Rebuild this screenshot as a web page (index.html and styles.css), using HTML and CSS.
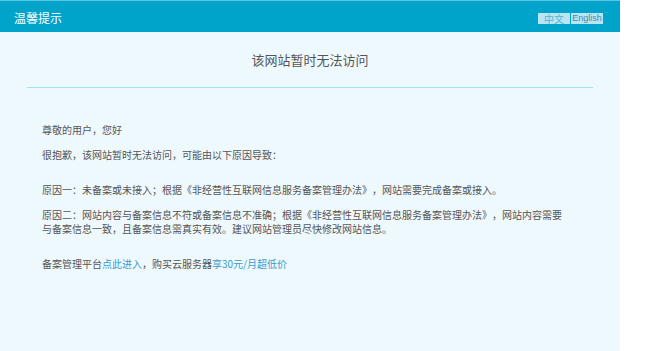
FILE: index.html
```html
<!DOCTYPE html>
<html lang="zh-CN">
<head>
    <meta charset="UTF-8">
    <meta name="viewport" content="width=device-width, initial-scale=1.0">
    <title>该网站暂时无法访问</title>
    <link rel="stylesheet" href="styles.css">
</head>
<body>
    <div class="page">
        <div class="header">
            <span class="header-title">温馨提示</span>
            <div class="lang">
                <span class="lang-item lang-cn">中文</span>
                <span class="lang-item lang-en">English</span>
            </div>
        </div>
        <h1 class="notice-title">该网站暂时无法访问</h1>
        <div class="divider"></div>
        <div class="notice-body">
            <div class="group">
                <p>尊敬的用户，您好</p>
                <p>很抱歉，该网站暂时无法访问，可能由以下原因导致：</p>
            </div>
            <div class="group">
                <p>原因一：未备案或未接入；根据《非经营性互联网信息服务备案管理办法》，网站需要完成备案或接入。</p>
                <p>原因二：网站内容与备案信息不符或备案信息不准确；根据《非经营性互联网信息服务备案管理办法》，网站内容需要与备案信息一致，且备案信息需真实有效。建议网站管理员尽快修改网站信息。</p>
            </div>
            <div class="group">
                <p>备案管理平台<a href="#">点此进入</a>，购买云服务器<a href="#">享30元/月超低价</a></p>
            </div>
        </div>
    </div>
</body>
</html>
```

FILE: styles.css
```css
body {
    margin: 0;
    background: #fff;
    font-family: 'Noto Sans CJK SC', 'Noto Sans', sans-serif;
    color: #555;
    text-spacing-trim: space-all;
}

.page {
    width: 620px;
    min-height: 351px;
    background: #eef9fe;
}

.header {
    height: 31px;
    border-top: 1px solid #5cc6e0;
    background: #00a4cb;
    padding: 0 14px;
    display: flex;
    justify-content: space-between;
    align-items: center;
}

.header-title {
    color: #fff;
    font-size: 12px;
    line-height: 18px;
    margin-top: 2px;
}

.lang {
    display: flex;
    gap: 1px;
    margin-right: 3px;
    margin-top: 3px;
}

.lang-item {
    background: #b8e5f1;
    font-size: 10px;
    line-height: 11px;
    height: 11px;
    min-width: 32px;
    text-align: center;
}

.lang-cn {
    color: #4fb8d6;
}

.lang-en {
    font-family: 'Liberation Sans', sans-serif;
    font-size: 9px;
    color: #3d8fb0;
}

.notice-title {
    margin: 0;
    padding-top: 18px;
    font-size: 13px;
    font-weight: normal;
    line-height: 20px;
    text-align: center;
    color: #555;
}

.divider {
    height: 1px;
    margin: 17px 27px 0;
    background: #a5e1ee;
}

.notice-body {
    padding: 35px 52px 0 42px;
    font-size: 10px;
    line-height: 14px;
}

.notice-body p {
    margin: 0;
}

.group {
    display: flex;
    flex-direction: column;
    gap: 11px;
    margin-bottom: 21px;
}

.notice-body a {
    color: #3a9bcc;
    text-decoration: none;
}
```
